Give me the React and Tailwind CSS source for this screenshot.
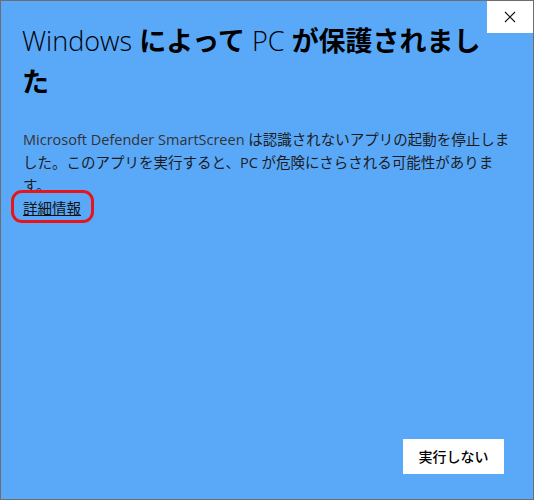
export default function App() {
  const ff = { fontFamily: '"Noto Sans", "Noto Sans CJK JP", sans-serif' };
  return (
    <div className="w-[534px] h-[500px] bg-[#5aa9f9] border border-[#6e6e6e] flex flex-col relative" style={ff}>
      <div className="flex justify-end">
        <div className="w-[46px] h-[32px] bg-white flex items-center justify-center">
          <svg width="12" height="12" viewBox="0 0 12 12">
            <path d="M1 1L11 11M11 1L1 11" stroke="#111" strokeWidth="1.1" fill="none" />
          </svg>
        </div>
      </div>
      <div className="px-[21px] flex flex-col flex-1">
        <h1 className="text-[27px] leading-[40px] text-black -mt-[13px] w-[470px]">
          <span className="font-light" style={{ fontFamily: '"Open Sans", sans-serif' }}>Windows</span>{' '}
          <span className="font-bold" style={{ fontFamily: '"Noto Sans CJK JP", sans-serif' }}>によって</span>{' '}
          <span className="font-light" style={{ fontFamily: '"Open Sans", sans-serif' }}>PC</span>{' '}
          <span className="font-bold" style={{ fontFamily: '"Noto Sans CJK JP", sans-serif' }}>が保護されまし<br />た</span>
        </h1>
        <p className="mt-[26px] text-[14.5px] leading-[22px] text-[#1c1c1c] ml-[1px]">
          <span className="text-[#333]" style={{ fontFamily: '"Open Sans", sans-serif' }}>Microsoft Defender SmartScreen</span> は認識されないアプリの起動を停止しま<br />
          した。このアプリを実行すると、<span style={{ fontFamily: '"Open Sans", sans-serif' }}>PC</span> が危険にさらされる可能性がありま<br />
          す。
        </p>
        <div className="relative self-start ml-[1px]">
          <span className="text-[14.5px] leading-[22px] underline text-[#111]">詳細情報</span>
          <div className="absolute -left-[12px] -right-[13px] -top-[6px] -bottom-[3px] border-[3px] border-[#e8141c] rounded-[11px]" />
        </div>
        <div className="flex-1" />
        <div className="flex justify-end pb-[25px] pr-[8px]">
          <button className="w-[101px] h-[35px] bg-white text-[14px] font-medium text-black" style={{ fontFamily: '"Noto Sans CJK JP", sans-serif' }}>実行しない</button>
        </div>
      </div>
    </div>
  );
}
